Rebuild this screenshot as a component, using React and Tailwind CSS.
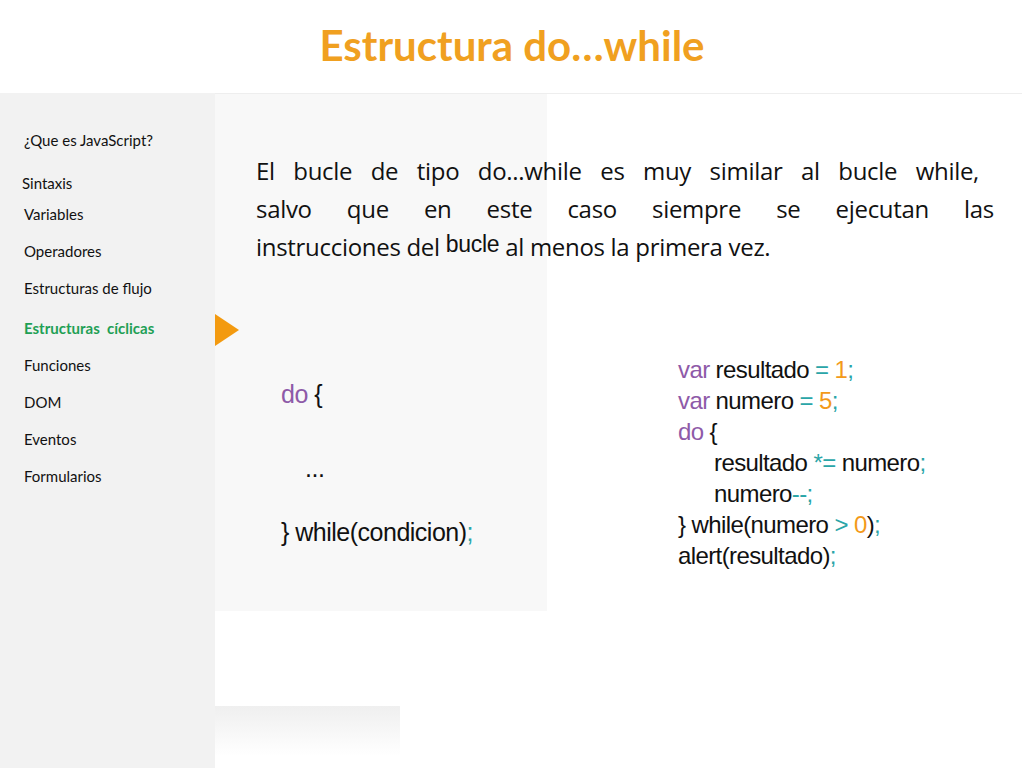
export default function App() {
  const nav = [
    ["¿Que es JavaScript?", "mt-0 ml-[24px]"],
    ["Sintaxis", "mt-[23px] ml-[22px]"],
    ["Variables", "mt-[11px] ml-[24px]"],
    ["Operadores", "mt-[17px] ml-[24px]"],
    ["Estructuras de flujo", "mt-[17px] ml-[24px]"],
    ["Estructuras  cíclicas", "mt-[20px] ml-[24px] text-[#1fa055] font-bold"],
    ["Funciones", "mt-[17px] ml-[24px]"],
    ["DOM", "mt-[17px] ml-[24px]"],
    ["Eventos", "mt-[17px] ml-[24px]"],
    ["Formularios", "mt-[17px] ml-[24px]"],
  ];
  const P = "text-[#8e5aa8]", T = "text-[#2aa5a8]", O = "text-[#f39a1a]";
  return (
    <div className="w-[1024px] h-[768px] bg-white overflow-hidden flex flex-col" style={{ fontFamily: "Lato, 'Open Sans', sans-serif" }}>
      <div className="h-[93px] flex items-center justify-center">
        <h1 className="text-[42px] font-bold text-[#f0a020] mt-[-2px]">Estructura do…while</h1>
      </div>
      <div className="flex flex-1">
        <div className="w-[215px] bg-[#f2f2f2] pt-[37px] flex flex-col text-[15px] leading-[20px] text-[#111] whitespace-pre">
          {nav.map(([t, c]) => <div key={t} className={c}>{t}</div>)}
        </div>
        <div className="flex-1 flex flex-col">
          <div className="relative h-[613px] mr-[2px] bg-[linear-gradient(to_right,#f8f8f8_332px,#ffffff_332px)] bg-no-repeat bg-[length:100%_517px] border-t border-[#eeeeee]">
            <div className="absolute left-0 top-[220px] w-0 h-0 border-t-[16px] border-b-[16px] border-l-[24px] border-t-transparent border-b-transparent border-l-[#f39a10]" />
            <div className="ml-[41px] mr-[28px] mt-[58px] text-[24px] leading-[38px] text-[#111]" style={{ fontFamily: "'Open Sans', sans-serif", letterSpacing: "-0.3px" }}>
              <div className="text-justify" style={{ textAlignLast: "justify", marginRight: 15 }}>El bucle de tipo do...while es muy similar al bucle while,</div>
              <div className="text-justify" style={{ textAlignLast: "justify" }}>salvo que en este caso siempre se ejecutan las</div>
              <div>instrucciones del <span className="relative top-[-4px]" style={{ fontFamily: "'Liberation Sans', sans-serif", fontSize: 23 }}>bucle</span> al menos la primera vez.</div>
            </div>
            <div className="flex mt-[87px]" style={{ fontFamily: "'Liberation Sans', Arial, sans-serif" }}>
              <div className="ml-[66px] w-[397px] text-[25px] tracking-[-0.5px] text-[#111] mt-[22px]">
                <div className="leading-[36px]"><span className={P}>do</span> {"{"}</div>
                <div className="leading-[36px] mt-[38px] ml-[24px]">...</div>
                <div className="leading-[36px] mt-[28px]">{"}"} while(condicion)<span className={T}>;</span></div>
              </div>
              <div className="text-[24px] leading-[31px] tracking-[-0.6px] text-[#111]">
                <div><span className={P}>var</span> resultado <span className={T}>=</span> <span className={O}>1</span><span className={T}>;</span></div>
                <div><span className={P}>var</span> numero <span className={T}>=</span> <span className={O}>5</span><span className={T}>;</span></div>
                <div><span className={P}>do</span> {"{"}</div>
                <div className="pl-[36px]">resultado <span className={T}>*=</span> numero<span className={T}>;</span></div>
                <div className="pl-[36px]">numero<span className={T}>--;</span></div>
                <div>{"}"} while(numero <span className={T}>&gt;</span> <span className={O}>0</span>)<span className={T}>;</span></div>
                <div>alert(resultado)<span className={T}>;</span></div>
              </div>
            </div>
          </div>
          <div className="flex-1 flex">
            <div className="w-[185px] h-[50px] bg-[linear-gradient(to_bottom,#efefef,#ffffff)]" />
          </div>
        </div>
      </div>
    </div>
  );
}
